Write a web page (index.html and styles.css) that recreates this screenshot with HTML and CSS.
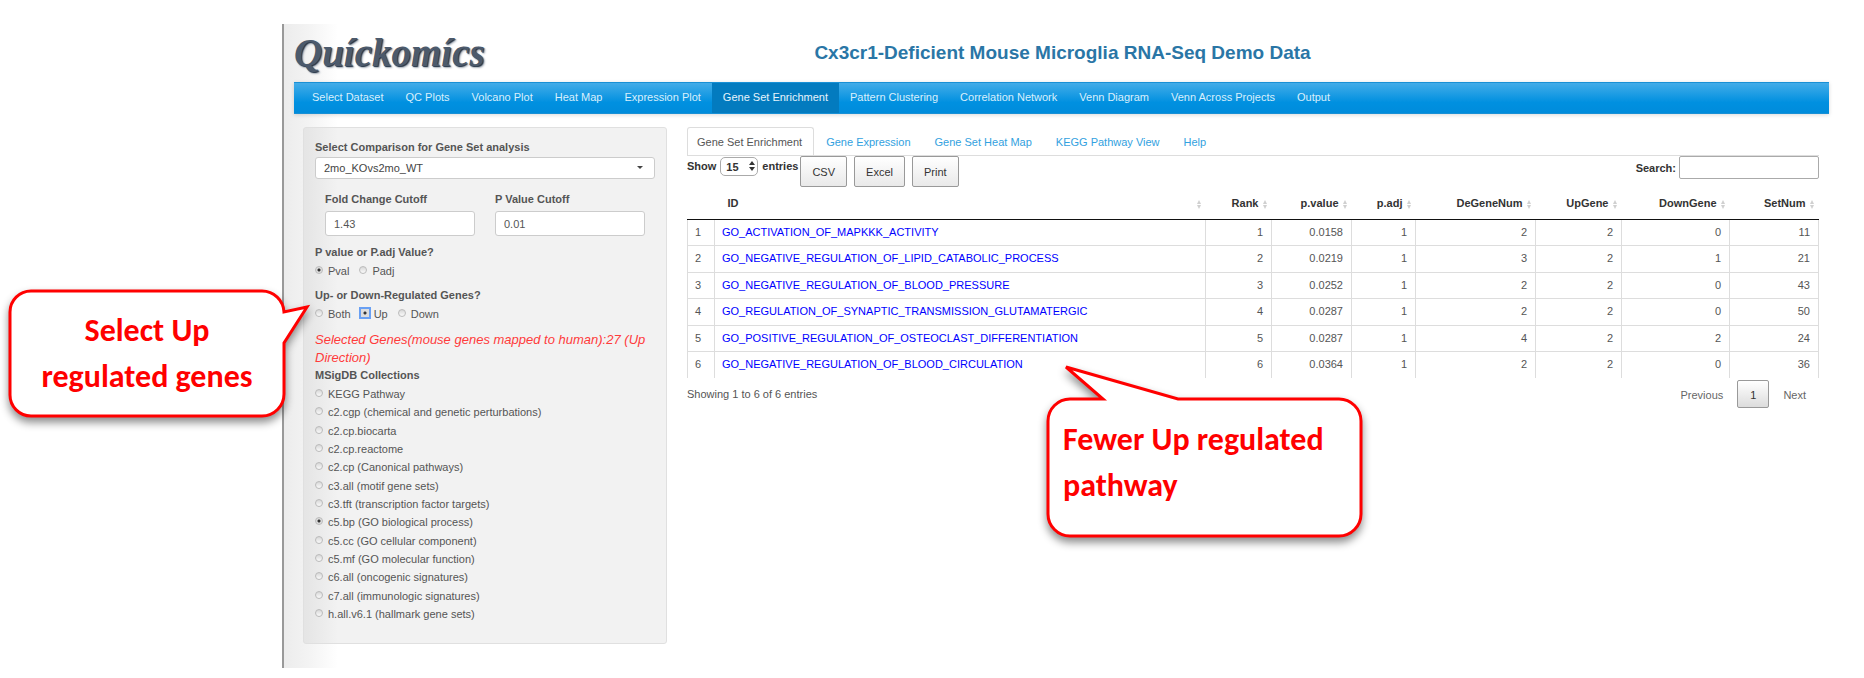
FILE: index.html
```html
<!DOCTYPE html>
<html lang="en">
<head>
<meta charset="utf-8">
<title>Quickomics</title>
<link rel="stylesheet" href="styles.css">
</head>
<body>
<div class="app">
  <header class="header">
    <div class="logo">Quíckomícs</div>
    <h1 class="title">Cx3cr1-Deficient Mouse Microglia RNA-Seq Demo Data</h1>
  </header>
  <nav class="navbar">
    <a href="#">Select Dataset</a>
    <a href="#">QC Plots</a>
    <a href="#">Volcano Plot</a>
    <a href="#">Heat Map</a>
    <a href="#">Expression Plot</a>
    <a href="#" class="active">Gene Set Enrichment</a>
    <a href="#">Pattern Clustering</a>
    <a href="#">Correlation Network</a>
    <a href="#">Venn Diagram</a>
    <a href="#">Venn Across Projects</a>
    <a href="#">Output</a>
  </nav>
  <div class="columns">
    <form class="sidebar">
      <label class="caption" for="comparison">Select Comparison for Gene Set analysis</label>
      <div class="comparison">
        <select id="comparison"><option>2mo_KOvs2mo_WT</option></select>
      </div>
      <div class="cutoffs">
        <div><label class="caption" for="fc">Fold Change Cutoff</label><input class="field" type="text" id="fc" value="1.43"></div>
        <div><label class="caption" for="pv">P Value Cutoff</label><input class="field" type="text" id="pv" value="0.01"></div>
      </div>
      <fieldset class="inline-group">
        <legend class="caption">P value or P.adj Value?</legend>
        <div class="inline-options">
          <label><input type="radio" name="ptype" checked>Pval</label>
          <label><input type="radio" name="ptype">Padj</label>
        </div>
      </fieldset>
      <fieldset class="inline-group">
        <legend class="caption">Up- or Down-Regulated Genes?</legend>
        <div class="inline-options">
          <label><input type="radio" name="dir">Both</label>
          <label><input type="radio" name="dir" class="focused" checked>Up</label>
          <label><input type="radio" name="dir">Down</label>
        </div>
      </fieldset>
      <p class="selected">Selected Genes(mouse genes mapped to human):27 (Up Direction)</p>
      <fieldset class="collections">
        <legend class="caption">MSigDB Collections</legend>
        <label><input type="radio" name="set">KEGG Pathway</label>
        <label><input type="radio" name="set">c2.cgp (chemical and genetic perturbations)</label>
        <label><input type="radio" name="set">c2.cp.biocarta</label>
        <label><input type="radio" name="set">c2.cp.reactome</label>
        <label><input type="radio" name="set">c2.cp (Canonical pathways)</label>
        <label><input type="radio" name="set">c3.all (motif gene sets)</label>
        <label><input type="radio" name="set">c3.tft (transcription factor targets)</label>
        <label><input type="radio" name="set" checked>c5.bp (GO biological process)</label>
        <label><input type="radio" name="set">c5.cc (GO cellular component)</label>
        <label><input type="radio" name="set">c5.mf (GO molecular function)</label>
        <label><input type="radio" name="set">c6.all (oncogenic signatures)</label>
        <label><input type="radio" name="set">c7.all (immunologic signatures)</label>
        <label><input type="radio" name="set">h.all.v6.1 (hallmark gene sets)</label>
      </fieldset>
    </form>
    <main class="main">
      <nav class="tabs">
        <a href="#" class="active">Gene Set Enrichment</a>
        <a href="#">Gene Expression</a>
        <a href="#">Gene Set Heat Map</a>
        <a href="#">KEGG Pathway View</a>
        <a href="#">Help</a>
      </nav>
      <div class="toolbar">
        <label class="length">Show
          <span class="length-box">
            <select><option>15</option></select>
            <svg width="6" height="10" viewBox="0 0 6 10"><path d="M3 0 6 4H0zM3 10 6 6H0z" fill="#333"/></svg>
          </span>
          entries</label>
        <div class="exports">
          <button type="button">CSV</button>
          <button type="button">Excel</button>
          <button type="button">Print</button>
        </div>
        <label class="search">Search:<input type="search"></label>
      </div>
      <table class="results">
        <colgroup>
          <col class="c-index"><col class="c-id"><col class="c-rank"><col class="c-pvalue"><col class="c-padj"><col class="c-de"><col class="c-up"><col class="c-down"><col class="c-set">
        </colgroup>
        <thead>
          <tr><th></th><th class="sort name">ID</th><th class="sort">Rank</th><th class="sort">p.value</th><th class="sort">p.adj</th><th class="sort">DeGeneNum</th><th class="sort">UpGene</th><th class="sort">DownGene</th><th class="sort">SetNum</th></tr>
        </thead>
        <tbody>
          <tr><td>1</td><td><a href="#">GO_ACTIVATION_OF_MAPKKK_ACTIVITY</a></td><td>1</td><td>0.0158</td><td>1</td><td>2</td><td>2</td><td>0</td><td>11</td></tr>
          <tr><td>2</td><td><a href="#">GO_NEGATIVE_REGULATION_OF_LIPID_CATABOLIC_PROCESS</a></td><td>2</td><td>0.0219</td><td>1</td><td>3</td><td>2</td><td>1</td><td>21</td></tr>
          <tr><td>3</td><td><a href="#">GO_NEGATIVE_REGULATION_OF_BLOOD_PRESSURE</a></td><td>3</td><td>0.0252</td><td>1</td><td>2</td><td>2</td><td>0</td><td>43</td></tr>
          <tr><td>4</td><td><a href="#">GO_REGULATION_OF_SYNAPTIC_TRANSMISSION_GLUTAMATERGIC</a></td><td>4</td><td>0.0287</td><td>1</td><td>2</td><td>2</td><td>0</td><td>50</td></tr>
          <tr><td>5</td><td><a href="#">GO_POSITIVE_REGULATION_OF_OSTEOCLAST_DIFFERENTIATION</a></td><td>5</td><td>0.0287</td><td>1</td><td>4</td><td>2</td><td>2</td><td>24</td></tr>
          <tr><td>6</td><td><a href="#">GO_NEGATIVE_REGULATION_OF_BLOOD_CIRCULATION</a></td><td>6</td><td>0.0364</td><td>1</td><td>2</td><td>2</td><td>0</td><td>36</td></tr>
        </tbody>
      </table>
      <div class="footer">
        <div>Showing 1 to 6 of 6 entries</div>
        <div class="pager">
          <button type="button">Previous</button>
          <button type="button" class="current">1</button>
          <button type="button">Next</button>
        </div>
      </div>
    </main>
  </div>
</div>

<div class="callout callout-select">
  <svg width="320" height="160" viewBox="0 0 320 160">
    <path d="M31 21H262A22 22 0 0 1 284 42L307 37 284 73V124A22 22 0 0 1 262 146H31A21 21 0 0 1 10 125V42A21 21 0 0 1 31 21Z"/>
  </svg>
  <p>Select Up<br>regulated genes</p>
</div>
<div class="callout callout-fewer">
  <svg width="340" height="200" viewBox="0 0 340 200">
    <path d="M31 49H64L27 17 139 49H300A22 22 0 0 1 322 71V164A22 22 0 0 1 300 186H31A22 22 0 0 1 9 164V71A22 22 0 0 1 31 49Z"/>
  </svg>
  <p>Fewer Up regulated pathway</p>
</div>
</body>
</html>
```
FILE: styles.css
```css
* { box-sizing: border-box; }

body {
  margin: 0;
  position: relative;
  background: #fff;
  color: #555;
  font: 11px/18px "Helvetica Neue", "Liberation Sans", Arial, sans-serif;
}

a { text-decoration: none; }

input, select, button { font: inherit; color: inherit; }

.app {
  margin: 24px 35px 12px 282px;
  padding-left: 10px;
  padding-bottom: 24px;
  border-left: 2px solid #999;
  background: linear-gradient(to right, #ececec, #f3f3f3 24px, #fff 54px);
}

/* Header */
.header {
  display: flex;
  align-items: center;
  height: 58px;
}

.logo {
  width: 188px;
  color: #4c5a6c;
  font: italic bold 39px/54px "Liberation Serif", serif;
  text-shadow: 1px 1px 1px #233244, 2px 2px 2px #b5bcc5;
  white-space: nowrap;
}

.title {
  flex: 1;
  margin: 0 186px 0 0;
  color: #2a76a6;
  font-size: 19px;
  line-height: 24px;
  text-align: center;
}

/* Main navigation */
.navbar {
  display: flex;
  height: 32px;
  padding-left: 7px;
  border: 1px solid #1990d5;
  border-width: 1px 0;
  background: linear-gradient(#43ace8, #0090e0 65%, #008cdb);
  box-shadow: 0 1px 4px rgba(0, 0, 0, .15);
}

.navbar a {
  padding: 0 11px;
  color: #d9effc;
  line-height: 29px;
}

.navbar .active {
  background: #037bbf;
  color: #e6f4fc;
}

.columns {
  display: flex;
  gap: 20px;
  padding: 13px 10px 0 9px;
}

/* Sidebar */
.sidebar {
  width: 364px;
  padding: 10px 11px 20px;
  border: 1px solid #e0e0e0;
  border-radius: 3px;
  background: rgba(0, 0, 0, .05);
}

.caption {
  display: block;
  padding: 0;
  font-weight: bold;
  line-height: 18px;
}

.comparison {
  position: relative;
  margin-top: 1px;
}

.comparison::after {
  content: "";
  position: absolute;
  top: 9px;
  right: 12px;
  border: 3px solid transparent;
  border-top-color: #444;
}

.comparison select {
  display: block;
  width: 100%;
  height: 22px;
  padding: 0 8px;
  border: 1px solid #ccc;
  border-radius: 3px;
  background: #fff;
  color: #444;
  appearance: none;
}

.cutoffs {
  display: grid;
  grid-template-columns: 1fr 1fr;
  gap: 20px;
  margin: 11px 10px 7px;
}

.field {
  display: block;
  width: 100%;
  height: 25px;
  margin-top: 3px;
  padding: 0 8px;
  border: 1px solid #ccc;
  border-radius: 3px;
  background: #fff;
}

fieldset {
  margin: 0;
  padding: 0;
  border: 0;
}

.inline-group { margin-bottom: 6px; }

.inline-options {
  display: flex;
  gap: 10px;
  height: 19px;
}

.inline-options label,
.collections label {
  display: flex;
  align-items: center;
  gap: 5px;
}

input[type="radio"] {
  width: 8px;
  height: 8px;
  margin: 0 0 2px;
  border: 1px solid #bbb;
  border-radius: 50%;
  background: linear-gradient(#d8d8d8, #fafafa);
  appearance: none;
}

input[type="radio"]:checked {
  background: radial-gradient(circle, #333 1px, #ddd 2px);
}

input[type="radio"].focused {
  outline: 2px solid #69a0f3;
  border-radius: 0;
  border-color: #ddd;
}

.selected {
  margin: 8px 0 0;
  color: #ff3b3b;
  font-size: 13px;
  font-style: italic;
  line-height: 18px;
}

.collections .caption { line-height: 16px; padding-bottom: 2px; }

.collections label { height: 18px; }

.collections label:nth-of-type(3n) { height: 19px; }

/* Tabs */
.main { flex: 1; }

.tabs {
  display: flex;
  border-bottom: 1px solid #ddd;
}

.tabs a {
  height: 28px;
  padding: 0 11px;
  border: 1px solid transparent;
  border-bottom: 0;
  color: #32a1e0;
  line-height: 28px;
}

.tabs .active {
  margin-bottom: -1px;
  padding: 0 11px 0 9px;
  border-color: #ddd;
  border-radius: 3px 3px 0 0;
  background: #fff;
  color: #555;
}

/* Table controls */
.toolbar {
  display: flex;
  align-items: flex-start;
  color: #333;
}

.length {
  display: flex;
  align-items: center;
  gap: 4px;
  height: 20px;
  font-weight: bold;
}

.length-box {
  display: flex;
  position: relative;
}

.length-box select {
  width: 38px;
  height: 19px;
  padding: 0 5px;
  border: 1px solid #aaa;
  border-radius: 5px;
  background: #fff;
  appearance: none;
}

.length-box svg {
  position: absolute;
  top: 4px;
  right: 3px;
}

.exports {
  display: flex;
  gap: 7px;
  margin-left: 2px;
}

.exports button {
  height: 31px;
  padding: 0 11px;
  border: 1px solid #999;
  border-radius: 2px;
  background: linear-gradient(#fff, #e9e9e9);
}

.search {
  display: flex;
  align-items: center;
  gap: 3px;
  margin-left: auto;
  font-weight: bold;
}

.search input {
  width: 140px;
  height: 23px;
  padding: 0 4px;
  border: 1px solid #aaa;
  border-radius: 2px;
  background: #fff;
}

/* Results table */
.results {
  width: 100%;
  border-collapse: collapse;
  table-layout: fixed;
}

.c-index { width: 27px; }
.c-rank { width: 66px; }
.c-pvalue { width: 80px; }
.c-padj { width: 64px; }
.c-de { width: 120px; }
.c-up { width: 86px; }
.c-down { width: 108px; }
.c-set { width: 89px; }

.results th {
  position: relative;
  height: 32px;
  padding: 1px 13px 0 0;
  border-bottom: 1px solid #111;
  color: #333;
  text-align: right;
}

.results .name {
  padding-left: 13px;
  text-align: left;
}

.sort::before,
.sort::after {
  content: "";
  position: absolute;
  right: 5px;
  border: 2px solid transparent;
}

.sort::before {
  top: 11px;
  border-bottom: 4px solid #d0d0d0;
}

.sort::after {
  top: 18px;
  border-top: 4px solid #d0d0d0;
}

.results td {
  height: 27px;
  padding: 0 8px 1px 0;
  border: 1px solid #ddd;
  text-align: right;
}

.results tr:nth-child(odd) td { height: 26px; }

.results tr:last-child td { border-bottom: 0; }

.results td:first-child,
.results td:nth-child(2) {
  padding-left: 7px;
  text-align: left;
}

.results a { color: #00f; }

.footer {
  display: flex;
  justify-content: space-between;
  padding-top: 2px;
  line-height: 28px;
}

.pager {
  display: flex;
  gap: 1px;
}

.pager button {
  height: 28px;
  padding: 0 12px;
  border: 1px solid transparent;
  background: none;
  color: #666;
}

.pager .current {
  border-color: #999;
  border-radius: 2px;
  background: linear-gradient(#fff, #dcdcdc);
  color: #333;
}

/* Annotation balloons */
.callout {
  position: absolute;
  color: #f00;
  font: bold 32px/46px Carlito, Lato, sans-serif;
}

.callout svg {
  display: block;
  filter: drop-shadow(0 5px 4px rgba(0, 0, 0, .45));
}

.callout path {
  fill: #fff;
  stroke: #f00;
  stroke-width: 3;
}

.callout p {
  position: absolute;
  margin: 0;
}

.callout-select { top: 270px; left: 0; }

.callout-select p {
  top: 38px;
  left: 10px;
  width: 274px;
  text-align: center;
}

.callout-fewer { top: 350px; left: 1039px; }

.callout-fewer p {
  top: 67px;
  left: 24px;
  width: 290px;
}
```
